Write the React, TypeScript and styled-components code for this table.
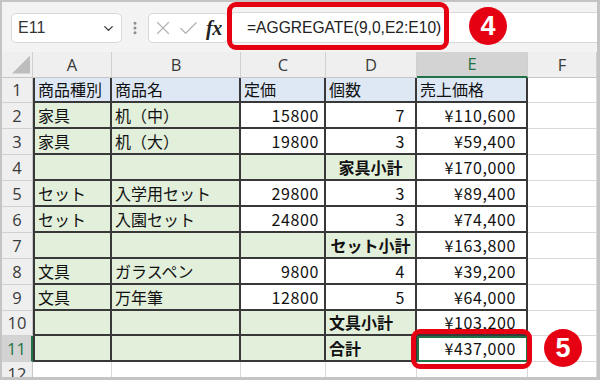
import React from "react";
import styled, { createGlobalStyle, css } from "styled-components";
import { ChevronDown, EllipsisVertical, X, Check } from "lucide-react";

const GlobalStyle = createGlobalStyle`
  html, body { margin: 0; padding: 0; background: #fff; }
  body { font-family: "Noto Sans CJK JP", "Noto Sans", sans-serif; }
  * { box-sizing: border-box; }
`;

const GREEN = "#217346";
const RED = "#e50012";
const DARK = "#383838";
const GRID = "#d9d9d9";

const Frame = styled.div`
  position: relative;
  width: 600px;
  height: 380px;
  border-style: solid;
  border-color: #c4c4c4;
  border-width: 2px 3px 3px 2px;
  background: #fff;
  display: flex;
  flex-direction: column;
  overflow: hidden;
`;

const Toolbar = styled.div`
  height: 50px;
  flex-shrink: 0;
  background: #f3f3f3;
  display: flex;
  align-items: flex-start;
  padding: 11px 0 0 9px;
`;

const NameBox = styled.div`
  width: 111px;
  height: 30px;
  background: #fff;
  border: 1px solid #d9d9d9;
  border-radius: 5px;
  display: flex;
  align-items: center;
  justify-content: space-between;
  padding: 0 5px 0 6px;
  font: 16px "Liberation Sans", Arial, sans-serif;
  color: #333;
`;

const DotsWrap = styled.div`
  width: 26px;
  height: 30px;
  display: flex;
  align-items: center;
  justify-content: center;
  color: #8c8c8c;
`;

const FxBox = styled.div`
  width: 81px;
  height: 30px;
  background: #fff;
  border: 1px solid #d9d9d9;
  border-radius: 5px;
  display: flex;
  align-items: center;
  padding-left: 3px;
  gap: 3px;
  color: #b4b4b4;
`;

const Fx = styled.span`
  font: italic 700 20px "Liberation Serif", "DejaVu Serif", serif;
  color: #222;
  margin-left: 3px;
  letter-spacing: -0.5px;
`;

const FormulaBox = styled.div`
  flex: 1;
  height: 31px;
  margin-top: -1px;
  margin-left: 2px;
  background: #fff;
  border: 1px solid #d9d9d9;
  border-right: none;
  border-radius: 4px 0 0 4px;
  display: flex;
  align-items: center;
  padding-left: 15px;
  font: 15.6px "Liberation Sans", Arial, sans-serif;
  color: #222;
`;

const Sheet = styled.div`
  flex: 1;
  display: grid;
  grid-template-columns: 31px 79px 129px 85px 91px 111px 69px;
  grid-template-rows: 25.5px repeat(11, 25.9px) 1fr;
`;

const headerText = css`
  font: 16.5px "Open Sans", "Liberation Sans", sans-serif;
  display: flex;
  align-items: center;
  justify-content: center;
`;

const Corner = styled.div`
  background: #efefef;
  border-right: 1px solid #d0d0d0;
  border-bottom: 1px solid #c6c6c6;
  display: flex;
  align-items: flex-end;
  justify-content: flex-end;
  padding: 0 2px 3px 0;
`;

const CornerTriangle = styled.div`
  width: 18px;
  height: 18px;
  background: #bdbdbd;
  clip-path: polygon(100% 0, 100% 100%, 0 100%);
`;

const ColHeader = styled.div<{ $active?: boolean }>`
  ${headerText};
  background: ${(p) => (p.$active ? "#d3d3d3" : "#efefef")};
  color: ${(p) => (p.$active ? GREEN : "#3a3a3a")};
  border-right: 1px solid #d0d0d0;
  border-bottom: ${(p) => (p.$active ? `2px solid ${GREEN}` : "1px solid #c6c6c6")};
`;

const RowHeader = styled.div<{ $active?: boolean }>`
  ${headerText};
  background: ${(p) => (p.$active ? "#d3d3d3" : "#efefef")};
  color: ${(p) => (p.$active ? GREEN : "#3a3a3a")};
  border-bottom: 1px solid #d0d0d0;
  border-right: ${(p) => (p.$active ? `2px solid ${GREEN}` : "1px solid #c6c6c6")};
`;

type Fill = "blue" | "green" | "white";
const FILLS: Record<Fill, string> = {
  blue: "#dde8f4",
  green: "#e2efda",
  white: "#ffffff",
};

const Cell = styled.div<{
  $fill: Fill;
  $align: "left" | "center" | "right";
  $bold?: boolean;
  $first?: boolean;
  $padR: number;
  $num?: boolean;
  $active?: boolean;
}>`
  background: ${(p) => FILLS[p.$fill]};
  border-right: 2px solid ${DARK};
  border-bottom: 2px solid ${DARK};
  border-left: ${(p) => (p.$first ? `2px solid ${DARK}` : "none")};
  display: flex;
  align-items: center;
  justify-content: ${(p) =>
    p.$align === "left" ? "flex-start" : p.$align === "center" ? "center" : "flex-end"};
  padding: 0 ${(p) => p.$padR}px 0 3px;
  font-family: "Noto Sans CJK JP", sans-serif;
  font-size: 16px;
  font-weight: ${(p) => (p.$bold ? 700 : 400)};
  letter-spacing: ${(p) => (p.$num ? "0.6px" : "0")};
  color: #111;
  white-space: nowrap;
  ${(p) =>
    p.$active &&
    css`
      outline: 2px solid ${GREEN};
      outline-offset: -2px;
    `}
`;

const Blank = styled.div`
  background: #fff;
  border-right: 1px solid ${GRID};
  border-bottom: 1px solid ${GRID};
`;

const RedFrame = styled.div<{ $left: number; $top: number; $w: number; $h: number }>`
  position: absolute;
  left: ${(p) => p.$left}px;
  top: ${(p) => p.$top}px;
  width: ${(p) => p.$w}px;
  height: ${(p) => p.$h}px;
  border: 5px solid ${RED};
  border-radius: 9px;
  pointer-events: none;
`;

const Badge = styled.div<{ $left: number; $top: number }>`
  position: absolute;
  left: ${(p) => p.$left}px;
  top: ${(p) => p.$top}px;
  width: 38px;
  height: 38px;
  border-radius: 50%;
  background: ${RED};
  color: #fff;
  display: flex;
  align-items: center;
  justify-content: center;
  font: 700 27px "Liberation Sans", Arial, sans-serif;
`;

type Row = {
  a?: string;
  b?: string;
  c?: string;
  d?: string;
  e: string;
  head?: boolean;
  sub?: boolean;
  dAlign?: "left" | "center";
};

const rows: Row[] = [
  { a: "商品種別", b: "商品名", c: "定価", d: "個数", e: "売上価格", head: true },
  { a: "家具", b: "机（中）", c: "15800", d: "7", e: "¥110,600" },
  { a: "家具", b: "机（大）", c: "19800", d: "3", e: "¥59,400" },
  { sub: true, d: "家具小計", dAlign: "center", e: "¥170,000" },
  { a: "セット", b: "入学用セット", c: "29800", d: "3", e: "¥89,400" },
  { a: "セット", b: "入園セット", c: "24800", d: "3", e: "¥74,400" },
  { sub: true, d: "セット小計", dAlign: "center", e: "¥163,800" },
  { a: "文具", b: "ガラスペン", c: "9800", d: "4", e: "¥39,200" },
  { a: "文具", b: "万年筆", c: "12800", d: "5", e: "¥64,000" },
  { sub: true, d: "文具小計", dAlign: "left", e: "¥103,200" },
  { sub: true, d: "合計", dAlign: "left", e: "¥437,000" },
];

const cols = ["A", "B", "C", "D", "E", "F"];

export default function App() {
  return (
    <>
      <GlobalStyle />
      <Frame>
        <Toolbar>
          <NameBox>
            <span>E11</span>
            <ChevronDown size={15} strokeWidth={2} color="#333" />
          </NameBox>
          <DotsWrap>
            <EllipsisVertical size={16} strokeWidth={2.5} />
          </DotsWrap>
          <FxBox>
            <X size={22} strokeWidth={1.3} />
            <Check size={23} strokeWidth={1.3} />
            <Fx>fx</Fx>
          </FxBox>
          <FormulaBox>=AGGREGATE(9,0,E2:E10)</FormulaBox>
        </Toolbar>
        <Sheet>
          <Corner>
            <CornerTriangle />
          </Corner>
          {cols.map((c) => (
            <ColHeader key={c} $active={c === "E"}>
              {c}
            </ColHeader>
          ))}
          {rows.map((r, i) => {
            const n = i + 1;
            const head = !!r.head;
            const side: Fill = head ? "blue" : "green";
            const mid: Fill = head ? "blue" : r.sub ? "green" : "white";
            return (
              <React.Fragment key={n}>
                <RowHeader $active={n === 11}>{n}</RowHeader>
                <Cell $fill={side} $align="left" $padR={3} $first>
                  {r.a}
                </Cell>
                <Cell $fill={side} $align="left" $padR={3}>
                  {r.b}
                </Cell>
                <Cell $fill={mid} $align={head ? "left" : "right"} $padR={5} $num={!head}>
                  {r.c}
                </Cell>
                <Cell
                  $fill={mid}
                  $align={head ? "left" : r.sub ? r.dAlign! : "right"}
                  $padR={r.sub ? 3 : 10}
                  $bold={r.sub}
                  $num={!head && !r.sub}
                >
                  {r.d}
                </Cell>
                <Cell
                  $fill={head ? "blue" : "white"}
                  $align={head ? "left" : "right"}
                  $padR={10}
                  $num={!head}
                  $active={n === 11}
                >
                  {r.e}
                </Cell>
                <Blank />
              </React.Fragment>
            );
          })}
          <RowHeader>12</RowHeader>
          {cols.map((c) => (
            <Blank key={c} />
          ))}
        </Sheet>
        <RedFrame $left={225} $top={0} $w={222} $h={48} />
        <Badge $left={467} $top={5}>4</Badge>
        <RedFrame $left={409} $top={327} $w={121} $h={40} />
        <Badge $left={542} $top={327}>5</Badge>
      </Frame>
    </>
  );
}
